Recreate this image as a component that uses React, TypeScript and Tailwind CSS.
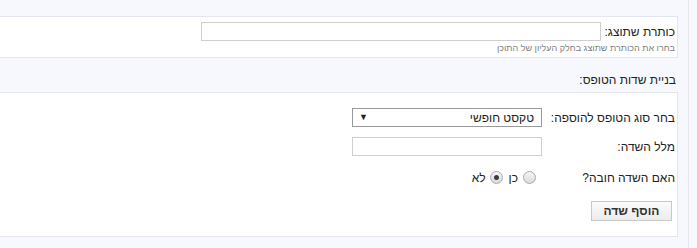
import React from "react";

function Radio({ checked }: { checked?: boolean }) {
  return (
    <span className="relative inline-block h-[13px] w-[13px] shrink-0 rounded-full border border-[#a9a9a9] bg-gradient-to-b from-[#f6f6f6] to-[#d9d9d9]">
      {checked && (
        <span className="absolute left-[3px] top-[3px] h-[5px] w-[5px] rounded-full bg-[#3c3c3c]" />
      )}
    </span>
  );
}

export default function App() {
  return (
    <div
      className="h-[248px] w-[697px] overflow-hidden bg-[#f6f8fd] text-[#222]"
      style={{ fontFamily: '"Liberation Sans", Arial, sans-serif' }}
    >
      <div className="h-full w-[689px] border-r border-[#e2e7f2]">
        <div dir="rtl" className="mr-[10px] pt-[16px]">
          {/* box 1 */}
          <div className="h-[42px] border-y border-r border-[#e3e6ee] bg-white pr-[2px] pt-[5px]">
            <div className="flex h-[19px] items-center">
              <span className="w-[74px] text-[12px] leading-none">כותרת שתוצג:</span>
              <input className="h-[19px] w-[400px] border border-[#cfcfcf] bg-white outline-none" />
            </div>
            <div className="mt-[1px] text-[9px] leading-[12px] text-[#808080]">
              בחרו את הכותרת שתוצג בחלק העליון של התוכן
            </div>
          </div>

          <div className="flex h-[34px] items-center pr-[2px] pt-[10px] text-[12px] leading-none">
            בניית שדות הטופס:
          </div>

          {/* box 2 */}
          <div className="h-[145px] border-y border-r border-[#e3e6ee] bg-white pr-[2px] pt-[15px]">
            <div className="flex h-[19px] items-center">
              <span className="w-[133px] text-[12px] leading-none">בחר סוג הטופס להוספה:</span>
              <div className="flex h-[19px] w-[190px] items-center justify-between border border-[#9a9a9a] bg-white pl-[6px] pr-[7px] text-[12px]">
                <span className="leading-none">טקסט חופשי</span>
                <span className="text-[9px] leading-none">▼</span>
              </div>
            </div>
            <div className="mt-[10px] flex h-[19px] items-center">
              <span className="w-[133px] text-[12px] leading-none">מלל השדה:</span>
              <input className="h-[19px] w-[190px] border border-[#cfcfcf] bg-white outline-none" />
            </div>
            <div className="mt-[12px] flex h-[19px] items-center">
              <span className="w-[133px] text-[12px] leading-none">האם השדה חובה?</span>
              <div className="flex items-center pr-[6px] text-[12px] leading-none">
                <Radio />
                <span className="mr-[5px]">כן</span>
                <span className="mr-[6px] flex">
                  <Radio checked />
                </span>
                <span className="mr-[4px]">לא</span>
              </div>
            </div>
            <div className="mt-[14px] flex pr-[3px]">
              <button className="h-[20px] w-[81px] border border-[#c8c8c8] bg-gradient-to-b from-[#fbfbfb] to-[#ececec] text-[12px] font-bold leading-none text-[#333]">
                הוסף שדה
              </button>
            </div>
          </div>
        </div>
      </div>
    </div>
  );
}
